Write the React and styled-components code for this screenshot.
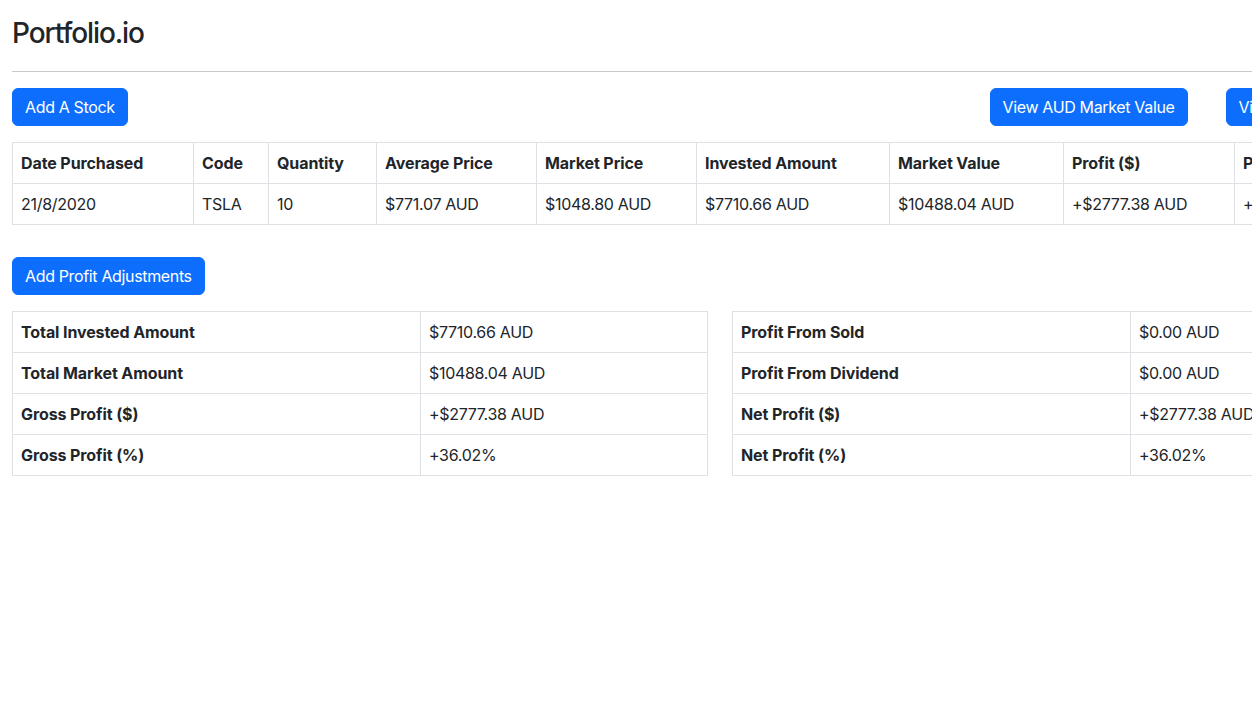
import styled, { createGlobalStyle } from 'styled-components';

const GlobalStyle = createGlobalStyle`
  *, *::before, *::after {
    box-sizing: border-box;
  }
  body {
    margin: 0;
    font-family: Inter, "Noto Sans", "Liberation Sans", sans-serif;
    font-size: 16px;
    line-height: 1.5;
    color: #212529;
    background: #fff;
  }
`;

const Page = styled.div`
  width: 1440px;
  padding: 17px 12px 0;
`;

const Title = styled.h3`
  margin: 0;
  font-size: 28px;
  font-weight: 500;
  line-height: 1.2;
  letter-spacing: -1.1px;
`;

const Rule = styled.hr`
  margin: 20px 0 16px;
  border: 0;
  border-top: 1px solid currentColor;
  color: inherit;
  opacity: 0.25;
`;

const Toolbar = styled.div`
  display: flex;
  justify-content: space-between;
  align-items: center;
`;

const ButtonGroup = styled.div`
  display: flex;
  gap: 38px;
  margin-right: 5px;
`;

const Button = styled.button`
  display: inline-block;
  padding: 6px 12px;
  font-family: inherit;
  font-size: 16px;
  line-height: 1.5;
  font-weight: 400;
  letter-spacing: -0.35px;
  color: #fff;
  background-color: #0d6efd;
  border: 1px solid #0d6efd;
  border-radius: 6px;
  cursor: pointer;
`;

const Table = styled.table`
  width: 100%;
  table-layout: fixed;
  border-collapse: collapse;
  margin-top: ${p => p.$top || 0}px;

  th,
  td {
    padding: 8px;
    border: 1px solid #dee2e6;
    text-align: left;
    vertical-align: top;
    white-space: nowrap;
    overflow: hidden;
  }
  th {
    font-weight: 700;
    letter-spacing: -0.1px;
  }
  td {
    letter-spacing: -0.3px;
  }
`;

const ActionBar = styled.div`
  margin-top: 32px;
`;

const SummaryGrid = styled.div`
  display: grid;
  grid-template-columns: 1fr 1fr;
  gap: 24px;
  margin-top: 16px;
`;

const stockColumns = [
  ['Date Purchased', 181],
  ['Code', 75],
  ['Quantity', 108],
  ['Average Price', 160],
  ['Market Price', 160],
  ['Invested Amount', 193],
  ['Market Value', 174],
  ['Profit ($)', 171],
  ['Profit (%)', 194],
];

const stockRow = [
  '21/8/2020',
  'TSLA',
  '10',
  '$771.07 AUD',
  '$1048.80 AUD',
  '$7710.66 AUD',
  '$10488.04 AUD',
  '+$2777.38 AUD',
  '+36.02%',
];

const leftSummary = [
  ['Total Invested Amount', '$7710.66 AUD'],
  ['Total Market Amount', '$10488.04 AUD'],
  ['Gross Profit ($)', '+$2777.38 AUD'],
  ['Gross Profit (%)', '+36.02%'],
];

const rightSummary = [
  ['Profit From Sold', '$0.00 AUD'],
  ['Profit From Dividend', '$0.00 AUD'],
  ['Net Profit ($)', '+$2777.38 AUD'],
  ['Net Profit (%)', '+36.02%'],
];

const SummaryTable = ({ rows, labelWidth }) => (
  <Table>
    <colgroup>
      <col style={{ width: labelWidth }} />
      <col />
    </colgroup>
    <tbody>
      {rows.map(([label, value]) => (
        <tr key={label}>
          <th>{label}</th>
          <td>{value}</td>
        </tr>
      ))}
    </tbody>
  </Table>
);

export default function App() {
  return (
    <Page>
      <GlobalStyle />
      <Title>Portfolio.io</Title>
      <Rule />
      <Toolbar>
        <Button>Add A Stock</Button>
        <ButtonGroup>
          <Button>View AUD Market Value</Button>
          <Button>View USD Market Value</Button>
        </ButtonGroup>
      </Toolbar>
      <Table $top={16}>
        <colgroup>
          {stockColumns.map(([name, w]) => (
            <col key={name} style={{ width: w }} />
          ))}
        </colgroup>
        <thead>
          <tr>
            {stockColumns.map(([name]) => (
              <th key={name}>{name}</th>
            ))}
          </tr>
        </thead>
        <tbody>
          <tr>
            {stockRow.map((v, i) => (
              <td key={i}>{v}</td>
            ))}
          </tr>
        </tbody>
      </Table>
      <ActionBar>
        <Button>Add Profit Adjustments</Button>
      </ActionBar>
      <SummaryGrid>
        <SummaryTable rows={leftSummary} labelWidth={408} />
        <SummaryTable rows={rightSummary} labelWidth={398} />
      </SummaryGrid>
    </Page>
  );
}
